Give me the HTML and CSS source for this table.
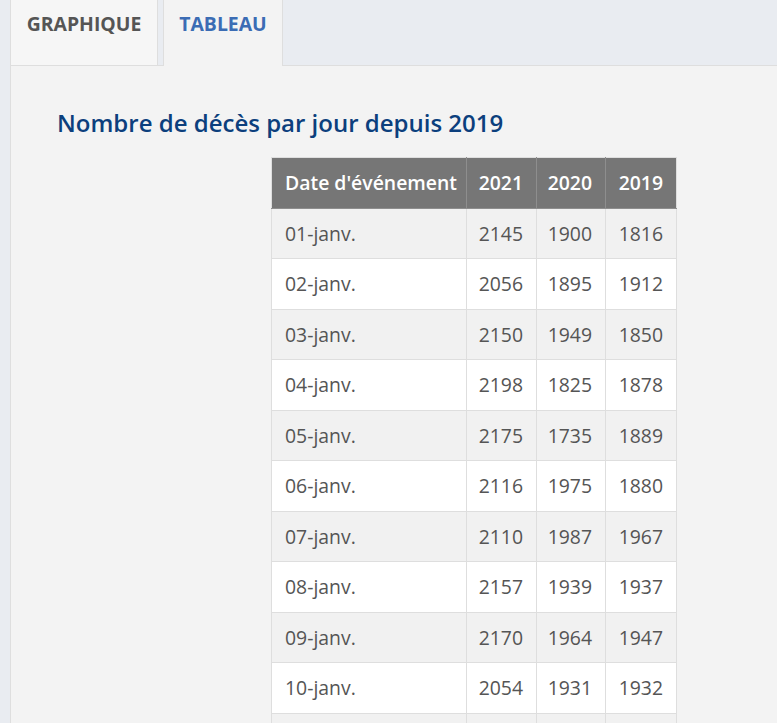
FILE: index.html
```html
<!DOCTYPE html>
<html lang="fr">
<head>
<meta charset="utf-8">
<title>Nombre de décès par jour depuis 2019</title>
<link rel="stylesheet" href="styles.css">
</head>
<body>
<div class="page">
  <div class="tabs">
    <div class="tab">GRAPHIQUE</div>
    <div class="tab-gap"></div>
    <div class="tab active">TABLEAU</div>
    <div class="tab-rest"></div>
  </div>
  <div class="panel">
    <h2 class="title">Nombre de décès par jour depuis 2019</h2>
    <table class="data">
      <colgroup>
        <col class="c-date"><col class="c-y1"><col class="c-y2"><col class="c-y3">
      </colgroup>
      <thead>
        <tr><th class="left">Date d'événement</th><th>2021</th><th>2020</th><th>2019</th></tr>
      </thead>
      <tbody>
        <tr><td class="left">01-janv.</td><td>2145</td><td>1900</td><td>1816</td></tr>
        <tr><td class="left">02-janv.</td><td>2056</td><td>1895</td><td>1912</td></tr>
        <tr><td class="left">03-janv.</td><td>2150</td><td>1949</td><td>1850</td></tr>
        <tr><td class="left">04-janv.</td><td>2198</td><td>1825</td><td>1878</td></tr>
        <tr><td class="left">05-janv.</td><td>2175</td><td>1735</td><td>1889</td></tr>
        <tr><td class="left">06-janv.</td><td>2116</td><td>1975</td><td>1880</td></tr>
        <tr><td class="left">07-janv.</td><td>2110</td><td>1987</td><td>1967</td></tr>
        <tr><td class="left">08-janv.</td><td>2157</td><td>1939</td><td>1937</td></tr>
        <tr><td class="left">09-janv.</td><td>2170</td><td>1964</td><td>1947</td></tr>
        <tr><td class="left">10-janv.</td><td>2054</td><td>1931</td><td>1932</td></tr>
        <tr class="empty"><td class="left"></td><td></td><td></td><td></td></tr>
      </tbody>
    </table>
  </div>
</div>
</body>
</html>
```
FILE: styles.css
```css
html, body {
  margin: 0;
  padding: 0;
  background: #e9ecf1;
  font-family: "Open Sans", "Liberation Sans", sans-serif;
}
.page {
  padding-left: 10px;
  height: 723px;
  overflow: hidden;
}
.tabs {
  display: flex;
  height: 65px;
  border-left: 1px solid #dedede;
}
.tab {
  box-sizing: border-box;
  height: 66px;
  width: 147px;
  padding: 11px 0 0 0;
  font-size: 19.4px;
  line-height: 26px;
  font-weight: 700;
  color: #555555;
  background: #f6f6f6;
  border-right: 1px solid #dedede;
  border-bottom: 1px solid #dedede;
  display: flex;
  align-items: flex-start;
  justify-content: center;
  white-space: nowrap;
}
.tab.active {
  width: 120px;
  background: #f3f3f3;
  color: #3b6cb4;
  border-left: 1px solid #dedede;
  border-bottom: none;
}
.tab-gap {
  width: 5px;
  height: 66px;
  box-sizing: border-box;
  border-bottom: 1px solid #dedede;
}
.tab-rest {
  flex: 1;
  height: 66px;
  box-sizing: border-box;
  border-bottom: 1px solid #dedede;
}
.panel {
  background: #f3f3f3;
  border-left: 1px solid #dedede;
  padding: 1px 0 0 46px;
  min-height: 700px;
}
.title {
  margin: 41px 0 18px 0;
  font-size: 24px;
  font-weight: 600;
  line-height: 32px;
  color: #0c3f7d;
  white-space: nowrap;
}
.data {
  margin-left: 214px;
  border-collapse: collapse;
  table-layout: fixed;
  width: 405px;
  font-size: 19.4px;
  line-height: 25.5px;
  border: 1px solid #dedede;
}
.c-date { width: 195px; }
.c-y1 { width: 70px; }
.c-y2 { width: 69px; }
.c-y3 { width: 71px; }
.data th {
  background: #767676;
  color: #ffffff;
  font-weight: 600;
  text-align: right;
  padding: 12px 13px 12px 0;
  border: 1px solid #8e8e8e;
  border-top-color: #dedede;
  white-space: nowrap;
}
.data th:first-child { border-left-color: #dedede; }
.data th:last-child { border-right-color: #dedede; }
.data td {
  color: #555555;
  text-align: right;
  padding: 12px 13px 12px 0;
  border: 1px solid #dedede;
  white-space: nowrap;
}
.data .left { text-align: left; padding-left: 13px; padding-right: 0; }
.data tbody tr:nth-child(odd) td { background: #f1f1f1; }
.data tbody tr:nth-child(even) td { background: #ffffff; }
.data tr.empty td { height: 25.5px; }
```
